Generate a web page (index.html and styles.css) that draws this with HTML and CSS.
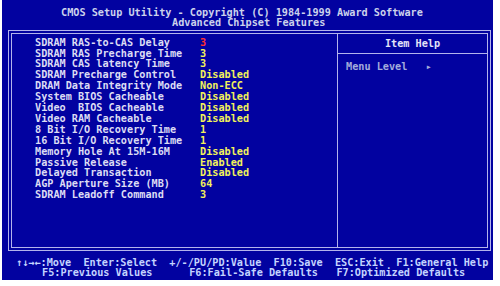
FILE: index.html
```html
<!DOCTYPE html>
<html lang="en">
<head>
    <meta charset="UTF-8">
    <meta name="viewport" content="width=device-width, initial-scale=1.0">
    <title>Advanced Chipset Features</title>
    <link rel="stylesheet" href="styles.css">
</head>
<body>
    <div class="screen">
        <header class="title">
            <div class="title-main">CMOS Setup Utility - Copyright (C) 1984-1999 Award Software</div>
            <div class="title-sub">Advanced Chipset Features</div>
        </header>

        <main class="box">
            <section class="menu">
                <div class="row"><span class="label">SDRAM RAS-to-CAS Delay</span><span class="value selected">3</span></div>
                <div class="row"><span class="label">SDRAM RAS Precharge Time</span><span class="value">3</span></div>
                <div class="row"><span class="label">SDRAM CAS latency Time</span><span class="value">3</span></div>
                <div class="row"><span class="label">SDRAM Precharge Control</span><span class="value">Disabled</span></div>
                <div class="row"><span class="label">DRAM Data Integrity Mode</span><span class="value">Non-ECC</span></div>
                <div class="row"><span class="label">System BIOS Cacheable</span><span class="value">Disabled</span></div>
                <div class="row"><span class="label">Video  BIOS Cacheable</span><span class="value">Disabled</span></div>
                <div class="row"><span class="label">Video RAM Cacheable</span><span class="value">Disabled</span></div>
                <div class="row"><span class="label">8 Bit I/O Recovery Time</span><span class="value">1</span></div>
                <div class="row"><span class="label">16 Bit I/O Recovery Time</span><span class="value">1</span></div>
                <div class="row"><span class="label">Memory Hole At 15M-16M</span><span class="value">Disabled</span></div>
                <div class="row"><span class="label">Passive Release</span><span class="value">Enabled</span></div>
                <div class="row"><span class="label">Delayed Transaction</span><span class="value">Disabled</span></div>
                <div class="row"><span class="label">AGP Aperture Size (MB)</span><span class="value">64</span></div>
                <div class="row"><span class="label">SDRAM Leadoff Command</span><span class="value">3</span></div>
            </section>

            <aside class="help">
                <div class="help-head">Item Help</div>
                <div class="help-body">Menu Level   &#9656;</div>
            </aside>
        </main>

        <footer class="keys">
            <div class="keys-line">&#8593;&#8595;&#8594;&#8592;:Move  Enter:Select  +/-/PU/PD:Value  F10:Save  ESC:Exit  F1:General Help</div>
            <div class="keys-line keys-second">F5:Previous Values      F6:Fail-Safe Defaults   F7:Optimized Defaults</div>
        </footer>
    </div>
</body>
</html>
```

FILE: styles.css
```css
body {
    margin: 0;
    background: #ffffff;
    font-family: "DejaVu Sans Mono", "Liberation Mono", monospace;
    font-size: 10.2px;
    font-weight: bold;
    line-height: 10.3px;
}
.screen {
    width: 491px;
    height: 272px;
    margin-left: 2px;
    padding-top: 8px;
    background: #0202a0;
}
.title {
    color: #ccd2ec;
}
.title-main,
.title-sub {
    white-space: pre;
}
.title-main {
    padding-left: 59px;
}
.title-sub {
    padding-left: 170px;
}
.box {
    display: flex;
    width: 475px;
    height: 213px;
    margin: 1px 0 0 6px;
    border: 4px double #b4b4ec;
}
.menu {
    width: 302px;
    padding: 4px 0 0 23px;
    border-right: 1px solid #b4b4ec;
    line-height: 10.9px;
}
.row {
    display: flex;
    white-space: pre;
}
.label {
    width: 165px;
    color: #dcdcf4;
}
.value {
    color: #f2f25a;
}
.value.selected {
    color: #ff3030;
}
.help {
    flex: 1;
}
.help-head {
    height: 14px;
    padding-top: 5px;
    text-align: center;
    color: #e4e4f8;
    border-bottom: 1px solid #b4b4ec;
}
.help-body {
    padding: 8px 0 0 8px;
    color: #a4acdc;
    white-space: pre;
}
.keys {
    margin-top: 7px;
    color: #c4d4ff;
}
.keys-line {
    padding-left: 14px;
    white-space: pre;
}
.keys-second {
    padding-left: 40px;
}
```
